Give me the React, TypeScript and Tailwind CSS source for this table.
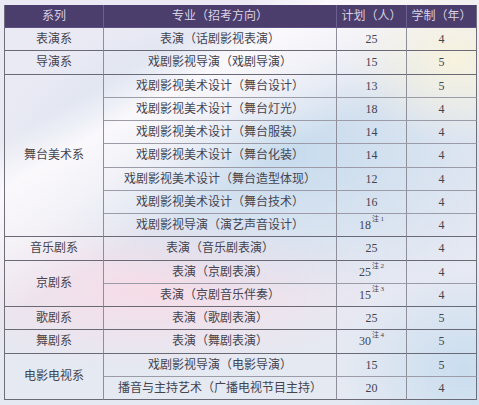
import React from "react";

type Item = { major: string; plan: string; note?: string; years: string };
type Section = { dept: string; items: Item[] };

const sections: Section[] = [
  { dept: "表演系", items: [{ major: "表演（话剧影视表演）", plan: "25", years: "4" }] },
  { dept: "导演系", items: [{ major: "戏剧影视导演（戏剧导演）", plan: "15", years: "5" }] },
  {
    dept: "舞台美术系",
    items: [
      { major: "戏剧影视美术设计（舞台设计）", plan: "13", years: "5" },
      { major: "戏剧影视美术设计（舞台灯光）", plan: "18", years: "4" },
      { major: "戏剧影视美术设计（舞台服装）", plan: "14", years: "4" },
      { major: "戏剧影视美术设计（舞台化装）", plan: "14", years: "4" },
      { major: "戏剧影视美术设计（舞台造型体现）", plan: "12", years: "4" },
      { major: "戏剧影视美术设计（舞台技术）", plan: "16", years: "4" },
      { major: "戏剧影视导演（演艺声音设计）", plan: "18", note: "注 1", years: "4" },
    ],
  },
  { dept: "音乐剧系", items: [{ major: "表演（音乐剧表演）", plan: "25", years: "4" }] },
  {
    dept: "京剧系",
    items: [
      { major: "表演（京剧表演）", plan: "25", note: "注 2", years: "4" },
      { major: "表演（京剧音乐伴奏）", plan: "15", note: "注 3", years: "4" },
    ],
  },
  { dept: "歌剧系", items: [{ major: "表演（歌剧表演）", plan: "25", years: "5" }] },
  { dept: "舞剧系", items: [{ major: "表演（舞剧表演）", plan: "30", note: "注 4", years: "5" }] },
  {
    dept: "电影电视系",
    items: [
      { major: "戏剧影视导演（电影导演）", plan: "15", years: "5" },
      { major: "播音与主持艺术（广播电视节目主持）", plan: "20", years: "4" },
    ],
  },
];

const spanClass: Record<number, string> = {
  1: "row-span-1",
  2: "row-span-2",
  7: "row-span-7",
};

const font = { fontFamily: '"Liberation Serif", "Noto Sans CJK SC", serif' };

export default function App() {
  return (
    <div
      className="w-[479px] h-[405px] overflow-hidden pt-[5px] pl-[4px] bg-[#e8e9f3] bg-[radial-gradient(ellipse_110px_80px_at_455px_60px,#f7f3de,transparent),linear-gradient(150deg,transparent_21%,rgba(251,249,252,0.97)_28%,rgba(250,247,250,0.7)_36%,transparent_47%),radial-gradient(ellipse_280px_150px_at_280px_150px,#c6dbed,transparent),radial-gradient(ellipse_240px_80px_at_150px_290px,#f6dce7,transparent),radial-gradient(ellipse_120px_100px_at_465px_370px,#c9ddef,transparent),linear-gradient(180deg,#ebeaf4,#e4e9f2)]"
      style={font}
    >
      <div className="grid grid-cols-[99px_233px_70px_70px] grid-rows-[23px_repeat(16,23.25px)] w-[472px] border-l border-[#6f6f7c] text-[12px] leading-none text-[#44444f]">
        {["系列", "专业（招考方向）", "计划（人）", "学制（年）"].map((h, i) => (
          <div
            key={h}
            className={`flex items-center justify-center bg-[#4b3e6c] text-[#d8d1e6] border-b border-[#5d5080] ${
              i < 3 ? "border-r border-r-[#6c6090]" : "border-r border-r-[#6f6f7c]"
            }`}
          >
            {h}
          </div>
        ))}
        {sections.map((s) => (
          <React.Fragment key={s.dept}>
            <div
              className={`col-start-1 ${spanClass[s.items.length]} flex items-center justify-center border-r border-b border-r-[#8f8f9b] border-b-[#6a6a76]`}
            >
              {s.dept}
            </div>
            {s.items.map((it, idx) => {
              const last = idx === s.items.length - 1;
              const b = last ? "border-b-[#6a6a76]" : "border-b-[#9c9ca8]";
              return (
                <React.Fragment key={it.major}>
                  <div className={`col-start-2 flex items-center justify-center border-r border-b border-r-[#8f8f9b] ${b}`}>
                    {it.major}
                  </div>
                  <div className={`col-start-3 flex items-center justify-center border-r border-b border-r-[#8f8f9b] ${b}`}>
                    <span className="flex items-start">
                      {it.plan}
                      {it.note && (
                        <span className="ml-[1px] -mt-[3px] text-[7px] whitespace-nowrap">{it.note}</span>
                      )}
                    </span>
                  </div>
                  <div className={`col-start-4 flex items-center justify-center border-r border-b border-r-[#6f6f7c] ${b}`}>
                    {it.years}
                  </div>
                </React.Fragment>
              );
            })}
          </React.Fragment>
        ))}
      </div>
    </div>
  );
}
